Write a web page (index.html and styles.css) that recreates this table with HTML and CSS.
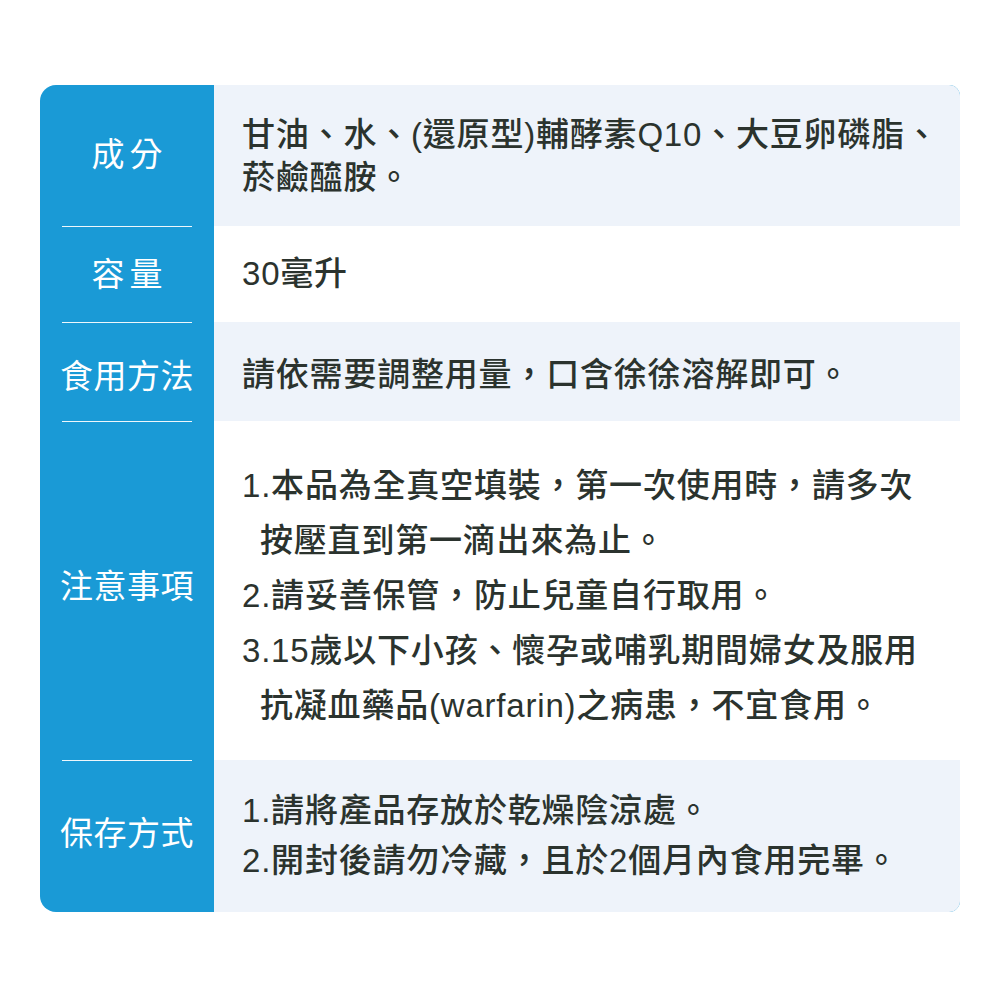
FILE: index.html
```html
<!DOCTYPE html>
<html lang="zh-Hant">
<head>
<meta charset="utf-8">
<link rel="stylesheet" href="styles.css">
</head>
<body>
<div class="spec">
  <div class="label wide r1"><span>成分</span></div>
  <div class="cell light r1">
    <div class="lines lh43">
      <div>甘油、水、(還原型)輔酵素Q10、大豆卵磷脂、</div>
      <div>菸鹼醯胺。</div>
    </div>
  </div>

  <div class="label wide sep r2"><span>容量</span></div>
  <div class="cell white r2">
    <div class="lines">30毫升</div>
  </div>

  <div class="label sep r3"><span>食用方法</span></div>
  <div class="cell light r3">
    <div class="lines">請依需要調整用量，口含徐徐溶解即可。</div>
  </div>

  <div class="label sep r4"><span>注意事項</span></div>
  <div class="cell white r4">
    <div class="lines lh55 notes">
      <div>1.本品為全真空填裝，第一次使用時，請多次</div>
      <div class="cont">按壓直到第一滴出來為止。</div>
      <div>2.請妥善保管，防止兒童自行取用。</div>
      <div>3.15歲以下小孩、懷孕或哺乳期間婦女及服用</div>
      <div class="cont">抗凝血藥品(warfarin)之病患，不宜食用。</div>
    </div>
  </div>

  <div class="label sep r5"><span>保存方式</span></div>
  <div class="cell light r5">
    <div class="lines lh50 store">
      <div>1.請將產品存放於乾燥陰涼處。</div>
      <div>2.開封後請勿冷藏，且於2個月內食用完畢。</div>
    </div>
  </div>
</div>
</body>
</html>
```

FILE: styles.css
```css
* { box-sizing: border-box; }
html, body {
  margin: 0;
  padding: 0;
  background: #ffffff;
}
body {
  font-family: "Liberation Sans", "Noto Sans CJK TC", sans-serif;
}
.spec {
  margin: 85px 0 0 40px;
  width: 920px;
  display: grid;
  grid-template-columns: 174px 1fr;
  grid-template-rows: 141px 96px 99px 339px 152px;
  background: #1a9ad6;
  border-radius: 16px 11px 11px 16px;
  overflow: hidden;
}
.label {
  margin: 0 22px;
  display: flex;
  align-items: center;
  justify-content: center;
  color: #ffffff;
  font-size: 33px;
  font-weight: 400;
  letter-spacing: 0.5px;
  white-space: nowrap;
}
.label.wide span {
  letter-spacing: 5px;
  margin-right: -5px;
}
.label.r1 span { margin-top: -8px; }
.label.r2 span { margin-top: -5px; }
.label.r3 span { margin-top: 4px; }
.label.r4 span { margin-top: -14px; }
.label.r5 span { margin-top: -12px; }
.label.sep {
  border-top: 1.5px solid rgba(255, 255, 255, 0.92);
}
.cell {
  display: flex;
  align-items: center;
  padding-left: 28px;
  color: #2b332e;
  font-size: 33px;
  font-weight: 500;
  letter-spacing: 0.8px;
  white-space: nowrap;
}
.cell.light { background: #eef3fa; }
.cell.white { background: #ffffff; }
.lines { line-height: 40px; }
.r3 .lines { margin-top: 6px; }
.lh43 { line-height: 43px; }
.lh55 { line-height: 55px; }
.lh50 { line-height: 50px; }
.notes { padding-top: 10px; }
.store { margin-top: 0; }
.cont { padding-left: 18px; }
```
